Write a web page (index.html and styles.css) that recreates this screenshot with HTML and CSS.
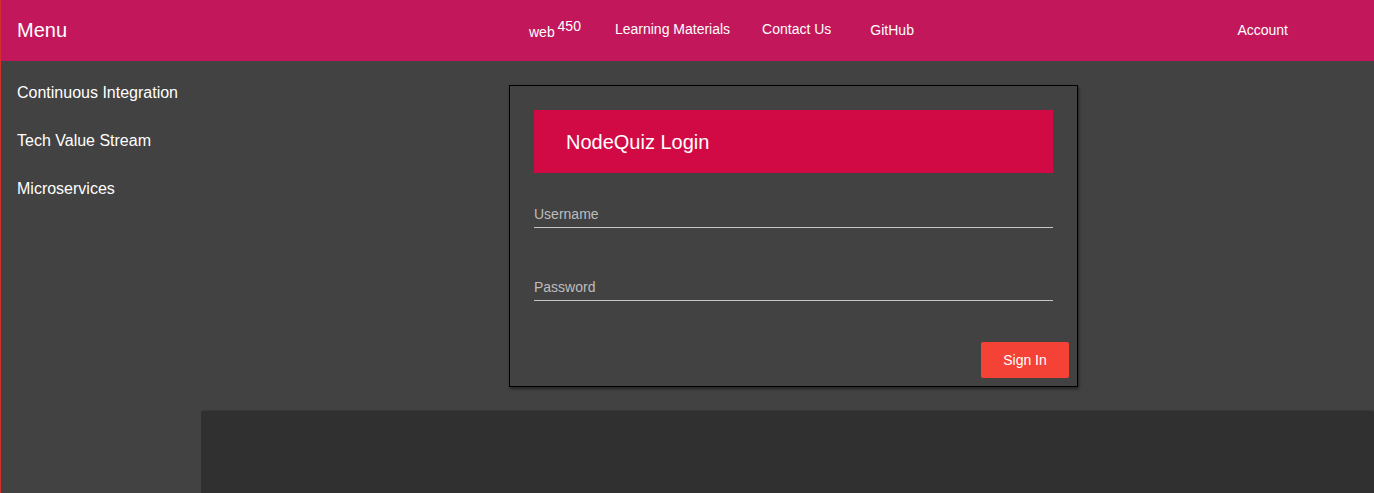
FILE: index.html
```html
<!DOCTYPE html>
<html lang="en">
<head>
<meta charset="utf-8">
<title>NodeQuiz Login</title>
<link rel="stylesheet" href="styles.css">
</head>
<body>
<div class="page">
  <header class="toolbar">
    <div class="brand">Menu</div>
    <nav class="nav">
      <a class="nav-link nav-web"><span class="web">web</span> 450</a>
      <a class="nav-link nav-learning">Learning Materials</a>
      <a class="nav-link nav-contact">Contact Us</a>
      <a class="nav-link nav-github">GitHub</a>
    </nav>
    <a class="nav-link account">Account</a>
  </header>
  <div class="body-row">
    <aside class="sidebar">
      <a class="side-item">Continuous Integration</a>
      <a class="side-item">Tech Value Stream</a>
      <a class="side-item">Microservices</a>
    </aside>
    <div class="content">
      <main class="main">
        <section class="card">
          <div class="card-header">NodeQuiz Login</div>
          <div class="field field-first"><span class="label">Username</span></div>
          <div class="field field-second"><span class="label">Password</span></div>
          <div class="actions"><button class="btn">Sign In</button></div>
        </section>
      </main>
      <footer class="footer"></footer>
    </div>
  </div>
</div>
</body>
</html>
```

FILE: styles.css
```css
* { box-sizing: border-box; }
html, body { margin: 0; padding: 0; height: 100%; }
body {
  font-family: "Liberation Sans", Arial, sans-serif;
  background: #424242;
  color: #fff;
  overflow: hidden;
}
.page {
  height: 493px;
  display: flex;
  flex-direction: column;
  border-left: 1px solid #d32f2f;
}
.toolbar {
  height: 61px;
  flex: none;
  background: #c2185b;
  display: flex;
  align-items: center;
  padding-left: 16px;
}
.brand {
  font-size: 20px;
  width: 512px;
  line-height: 24px;
  margin-top: -2px;
}
.nav {
  display: flex;
  align-items: center;
}
.nav-link {
  font-size: 14px;
  color: #fff;
  text-decoration: none;
  line-height: 16px;
  white-space: nowrap;
}
.nav-web { margin-top: -4px; }
.web { vertical-align: -6px; margin-right: -1px; }
.nav-learning { margin-left: 34px; margin-top: -3px; }
.nav-contact { margin-left: 32px; margin-top: -3px; }
.nav-github { margin-left: 39px; margin-top: -1px; }
.account { margin-left: auto; margin-right: 86px; margin-top: -1px; }

.body-row {
  flex: 1;
  display: flex;
  min-height: 0;
}
.sidebar {
  width: 200px;
  flex: none;
  background: #424242;
  padding-top: 8px;
  display: flex;
  flex-direction: column;
  position: relative;
  z-index: 1;
}
.side-item {
  height: 48px;
  line-height: 48px;
  padding-left: 16px;
  font-size: 16px;
  color: #fff;
}
.content {
  flex: 1;
  display: flex;
  flex-direction: column;
}
.main {
  height: 351px;
  flex: none;
  background: #424242;
  padding-top: 24px;
  padding-left: 308px;
}
.card {
  width: 569px;
  background: #424242;
  border: 1px solid #000;
  box-shadow: 1px 2px 3px rgba(0,0,0,0.45);
  padding: 24px 24px 8px 24px;
}
.card-header {
  height: 63px;
  background: #d10a46;
  font-size: 20px;
  line-height: 24px;
  padding: 20px 0 0 32px;
}
.field {
  border-bottom: 1px solid #c6c6c6;
  padding-bottom: 5px;
}
.field-first { padding-top: 33px; }
.field-second { margin-top: 51px; }
.label {
  display: block;
  font-size: 14px;
  line-height: 16px;
  color: #bdbdbd;
}
.actions {
  display: flex;
  justify-content: flex-end;
  margin-top: 41px;
  margin-right: -16px;
}
.btn {
  width: 88px;
  height: 36px;
  border: none;
  border-radius: 2px;
  background: #f44336;
  color: #fff;
  font-family: "Liberation Sans", Arial, sans-serif;
  font-size: 14px;
  padding: 0;
}
.footer {
  flex: 1;
  background: #303030;
  box-shadow: 0 -1px 2px rgba(0,0,0,0.4);
}
```
